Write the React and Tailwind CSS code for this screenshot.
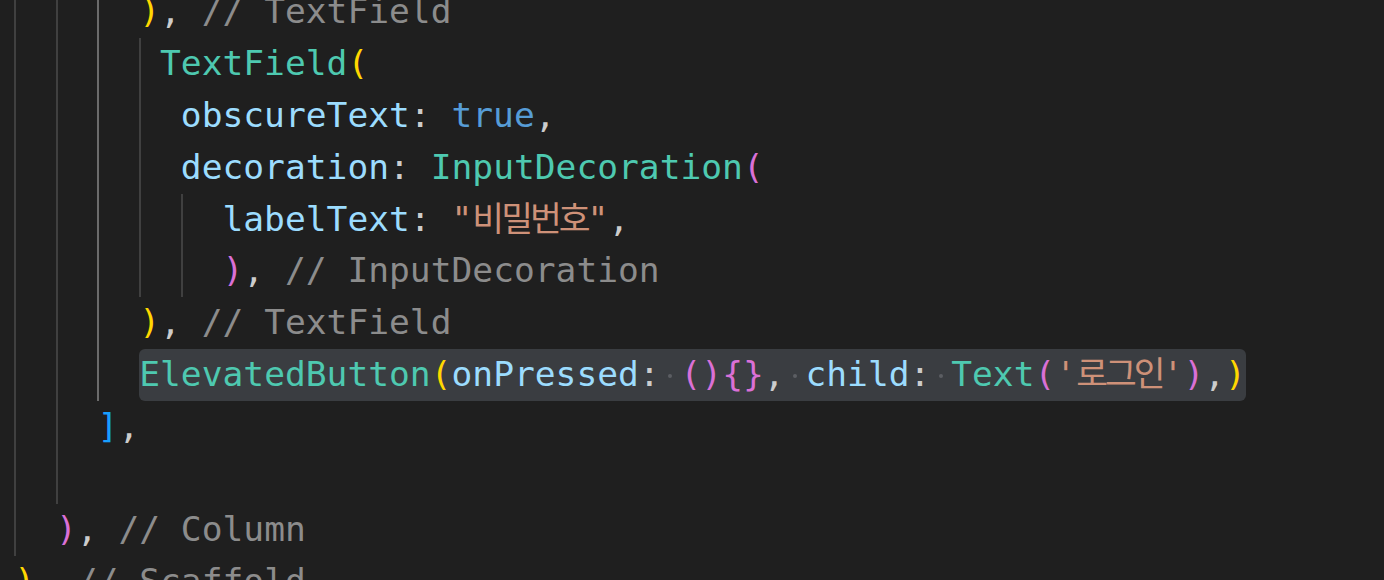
import React from "react";

const Y = ({ c }) => <span className="text-[#ffd700]">{c}</span>;
const P = ({ c }) => <span className="text-[#da70d6]">{c}</span>;
const B = ({ c }) => <span className="text-[#179fff]">{c}</span>;
const T = ({ c }) => <span className="text-[#4ec9b0]">{c}</span>;
const L = ({ c }) => <span className="text-[#9cdcfe]">{c}</span>;
const K = ({ c }) => <span className="text-[#569cd6]">{c}</span>;
const S = ({ children }) => <span className="text-[#ce9178]">{children}</span>;
const Ko = ({ c }) => <span className="tracking-[-3px]">{c}</span>;
const C = ({ c }) => <span className="text-[#8c8c8c]">{c}</span>;
const Dot = () => (
  <span className="inline-flex h-[51.8px] w-[20.83px] items-center justify-center align-top">
    <span className="mt-[3px] h-[4px] w-[4px] rounded-full bg-[#5b5e62]" />
  </span>
);

const Line = ({ children }) => (
  <div className="h-[51.8px] whitespace-pre leading-[51.8px]">{children}</div>
);

export default function App() {
  return (
    <div className="relative h-[580px] w-[1384px] overflow-hidden bg-[#1f1f1f] font-['DejaVu_Sans_Mono','Noto_Sans_CJK_KR',monospace] text-[34.6px] text-[#cccccc]">
      <div className="absolute left-[14px] top-0 h-[556px] w-[2px] bg-[#404040]" />
      <div className="absolute left-[56px] top-0 h-[504px] w-[2px] bg-[#404040]" />
      <div className="absolute left-[97px] top-0 h-[401px] w-[2px] bg-[#6b6b6b]" />
      <div className="absolute left-[139px] top-[38px] h-[259px] w-[2px] bg-[#404040]" />
      <div className="absolute left-[180.5px] top-[193.5px] h-[103.6px] w-[2px] bg-[#404040]" />

      <div className="mt-[-13.7px] pl-[14.3px]">
        <Line>
          {"      "}
          <Y c=")" />,<C c=" // TextField" />
        </Line>
        <Line>
          {"       "}
          <T c="TextField" />
          <Y c="(" />
        </Line>
        <Line>
          {"        "}
          <L c="obscureText" />: <K c="true" />,
        </Line>
        <Line>
          {"        "}
          <L c="decoration" />: <T c="InputDecoration" />
          <P c="(" />
        </Line>
        <Line>
          {"          "}
          <L c="labelText" />:{" "}
          <S>
            "<Ko c="비밀번호" />"
          </S>
          ,
        </Line>
        <Line>
          {"          "}
          <P c=")" />,<C c=" // InputDecoration" />
        </Line>
        <Line>
          {"      "}
          <Y c=")" />,<C c=" // TextField" />
        </Line>
        <Line>
          {"      "}
          <span className="inline-block h-[51.8px] rounded-[6px] bg-[#3a3d41] align-top">
            <T c="ElevatedButton" />
            <Y c="(" />
            <L c="onPressed" />:<Dot />
            <P c="(){}" />,<Dot />
            <L c="child" />:<Dot />
            <T c="Text" />
            <P c="(" />
            <S>
              '<Ko c="로그인" />'
            </S>
            <P c=")" />,<Y c=")" />
          </span>
        </Line>
        <Line>
          {"    "}
          <B c="]" />,
        </Line>
        <Line> </Line>
        <Line>
          {"  "}
          <P c=")" />,<C c=" // Column" />
        </Line>
        <Line>
          <Y c=")" />,<C c=" // Scaffold" />
        </Line>
      </div>
    </div>
  );
}
